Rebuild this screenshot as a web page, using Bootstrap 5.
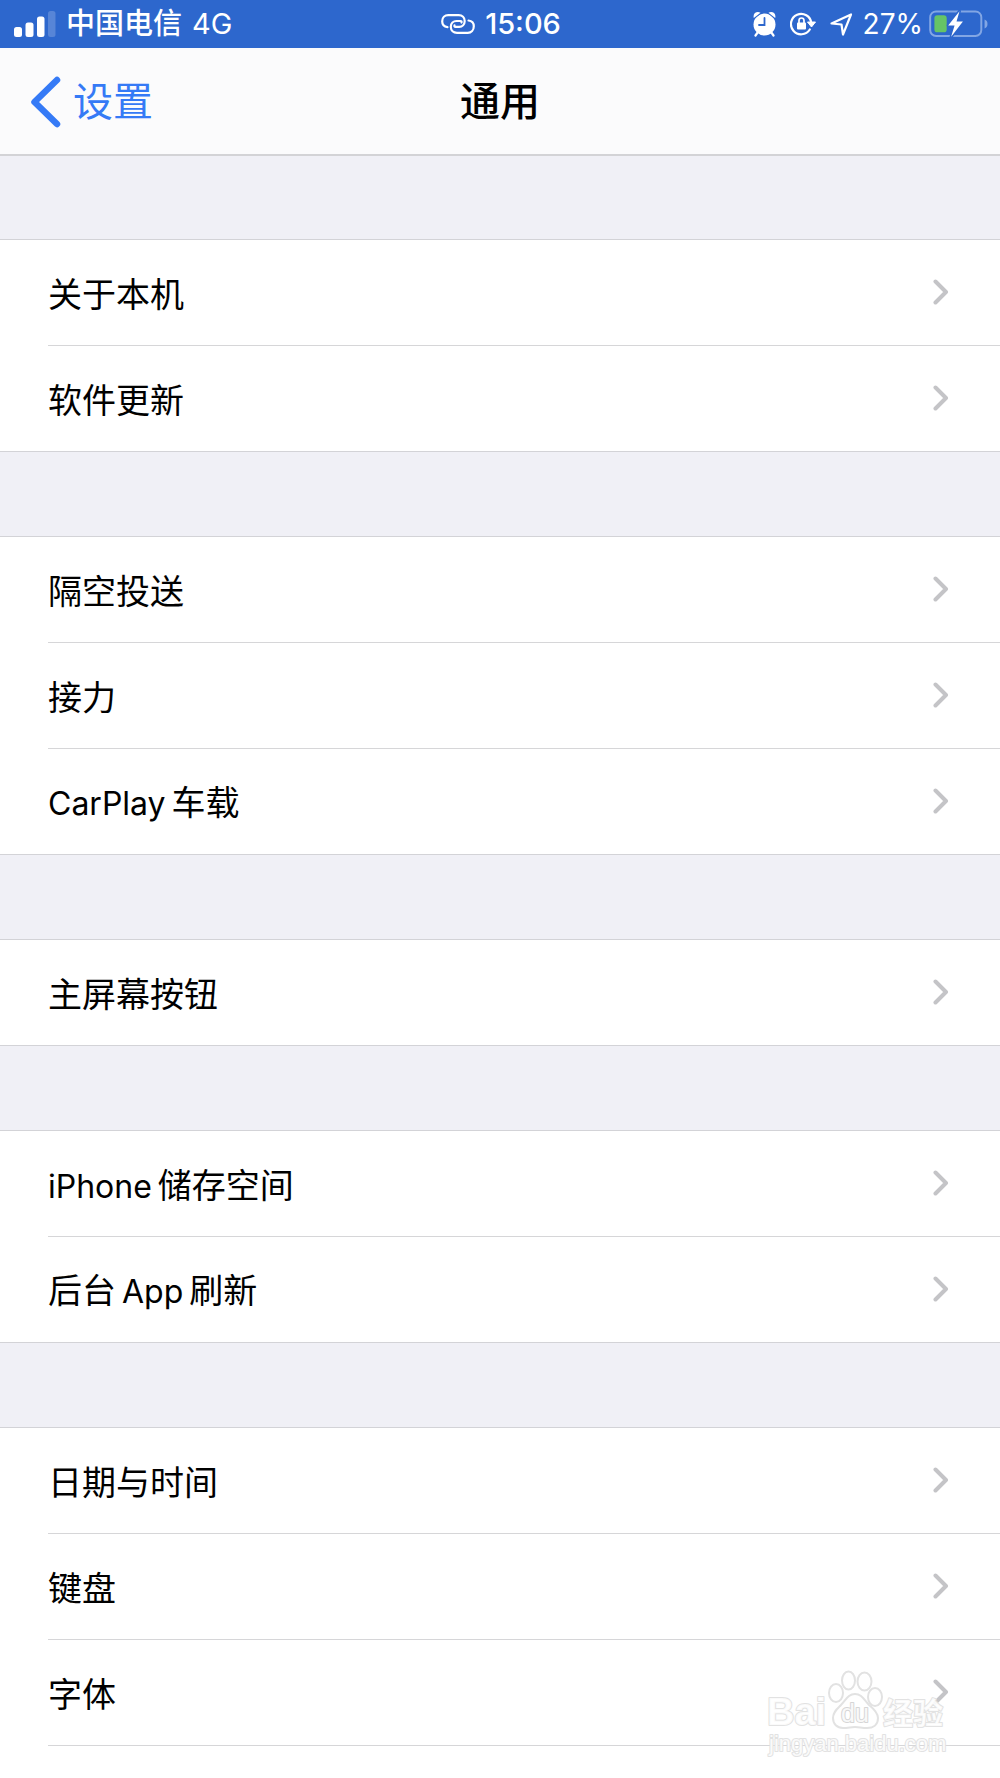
<!DOCTYPE html>
<html lang="zh-CN">
<head>
<meta charset="utf-8">
<meta name="viewport" content="width=device-width, initial-scale=1">
<title>通用</title>
<link rel="stylesheet" href="https://cdn.jsdelivr.net/npm/bootstrap@5.3.0/dist/css/bootstrap.min.css">
<style>
body { font-family: Inter, "Noto Sans CJK SC", sans-serif; color: #000; background: #f0f0f6; }
.page { min-height: 100vh; }
.statusbar { height: 48px; background: #2d67cd; color: #fff; font-size: 28px; line-height: 48px; padding: 0 12px 0 14px; }
.statusbar svg { flex: none; }
.side { flex: 1 1 0; }
.tight { gap: 10px; }
.carrier { gap: 10px; }
.carrier, .clock { font-size: 29px; font-weight: 500; }
.indicators { gap: 14px; }
.battery { gap: 6px; }
.topnav { height: 108px; background: #fbfbfc; border-bottom: 2px solid #d3d3d6; font-size: 40px; line-height: 60px; padding: 2px 30px 0; }
.topnav a { color: #357af6; gap: 12px; }
.topnav h1 { font-size: 40px; line-height: 60px; font-weight: 500; }
.settings { gap: 84px; padding-top: 83px; }
.settings .list-group { border-top: 1px solid #d3d3d7; background: #fff; }
.settings .list-group-item { height: 106px; padding: 0 51px 0 48px; font-size: 34px; line-height: 52px; color: #000; background: #fff; border: 0; }
.settings .list-group-item > span { padding-top: 4px; }
.settings .list-group-item > svg { margin-bottom: 2px; }
.settings .list-group-item:last-child { border-bottom: 1px solid #d3d3d7; }
.settings .list-group-item:not(:last-child)::after,
.settings .more .list-group-item::after { content: ""; position: absolute; left: 48px; right: 0; bottom: 0; border-bottom: 1px solid #d6d6d8; }
.settings .more .list-group-item { border-bottom: 0; }
.latin { font-size: 32px; }
.latin-before { margin-right: 6px; }
.latin-after { margin-left: 6px; }
.watermark { right: 50px; bottom: 16px; pointer-events: none; }
</style>
<script src="https://cdn.jsdelivr.net/npm/bootstrap@5.3.0/dist/js/bootstrap.bundle.min.js"></script>
</head>
<body>
<svg width="0" height="0" class="position-absolute" aria-hidden="true">
  <symbol id="chev" viewBox="0 0 16 26"><path d="M2.500 2.500 13 13 2.500 23.500" fill="none" stroke="#c4c4c7" stroke-width="4" stroke-linecap="round" stroke-linejoin="round"/></symbol>
</svg>
<div class="page d-flex flex-column position-relative overflow-hidden">
  <div class="statusbar d-flex align-items-center">
    <div class="side d-flex align-items-center carrier">
      <svg width="42" height="26" viewBox="0 0 42 26" fill="#fff" aria-label="信号"><rect x="0" y="16" width="8" height="10" rx="2.500"/><rect x="11.500" y="11.500" width="8" height="14.500" rx="2.500"/><rect x="23" y="5.500" width="7.500" height="20.500" rx="2.500"/><rect x="34" y="0" width="7.500" height="26" rx="2.500" opacity=".2"/></svg>
      <span>中国电信</span><span class="fw-normal">4G</span>
    </div>
    <div class="clock d-flex align-items-center tight">
      <svg width="34" height="20" viewBox="0 0 34 20" fill="none" stroke="#fff" stroke-width="2.200" stroke-linecap="round" aria-hidden="true"><path d="M6.500 13.200C3 12.700 1.200 10 1.200 7.200c0-3.600 2.600-6 6-6h10.500c3.500 0 6 2.300 6 5.800s-2.500 5.800-5.500 5.800h-3.700q-1.500 0-1-1.500"/><path d="M27.500 6.500c3.700.4 5.300 3 5.300 5.800 0 3.800-2.600 6.500-6 6.500H16c-3.600 0-6.200-2.500-6.200-6s2.600-5.800 5.700-5.800h4q1.500 0 1 1.500"/></svg>
      <span>15:06</span>
    </div>
    <div class="side d-flex align-items-center justify-content-end battery">
      <div class="indicators d-flex align-items-center">
      <svg width="23" height="26" viewBox="0 0 23 26" aria-label="闹钟"><g stroke="#fff" stroke-width="2.200" stroke-linecap="round"><path d="M5 21 2.500 24.500M18 21 20.500 24.500"/></g><circle cx="11.500" cy="13.500" r="11" fill="#fff"/><path d="M.8 7C-.5 2 4 0 7.500 1.700ZM22.200 7C23.500 2 19 0 15.500 1.700Z" fill="#fff" stroke="#2d67cd" stroke-width="2" paint-order="stroke"/><path d="M11.500 7v7H6" fill="none" stroke="#2d67cd" stroke-width="1.800" stroke-linecap="round"/></svg>
      <svg width="26" height="24" viewBox="0 0 26 24" aria-label="方向锁定"><path d="M21.300 11A10.200 10.200 0 1 0 19.800 17.500" fill="none" stroke="#fff" stroke-width="2.200" stroke-linecap="round"/><path d="M17.500 10h8L21.500 15Z" fill="#fff" stroke="#fff" stroke-linejoin="round"/><rect x="7" y="10.500" width="9" height="7" rx="1" fill="#fff"/><path d="M9 11V8.500a2.500 2.500 0 0 1 5 0V11" fill="none" stroke="#fff" stroke-width="1.700"/></svg>
      <svg width="23" height="23" viewBox="0 0 23 23" aria-label="定位"><path d="M1.500 10.500 21 1.500 13 21.500 11.500 11.500Z" fill="none" stroke="#fff" stroke-width="2.200" stroke-linejoin="round"/></svg>
      </div>
      <span class="ms-1">27%</span>
      <svg width="59" height="28" viewBox="0 0 60 28" aria-label="充电中"><rect x="1.200" y="1.200" width="52" height="25" rx="6" fill="none" stroke="#82a6e4" stroke-width="2"/><path d="M56.500 9.500v9q3-1 3-4.500t-3-4.500Z" fill="#82a6e4"/><rect x="5.500" y="5" width="12.500" height="17.500" rx="3" fill="#66c466"/><path d="M31 1 19.500 15.500H26L22.500 27 34.500 11.500H28Z" fill="#fff" stroke="#2d67cd" stroke-width="3" paint-order="stroke" stroke-linejoin="round"/></svg>
    </div>
  </div>

  <nav class="topnav d-flex align-items-center">
    <div class="side d-flex"><a href="#" class="d-flex align-items-center text-decoration-none"><svg width="31" height="52" viewBox="0 0 31 52" aria-hidden="true"><path d="M27 4 4.500 26 27 48" fill="none" stroke="#357af6" stroke-width="6.500" stroke-linecap="round" stroke-linejoin="round"/></svg><span>设置</span></a></div>
    <h1 class="m-0">通用</h1>
    <div class="side"></div>
  </nav>

  <main class="settings d-flex flex-column flex-grow-1">
    <div class="list-group rounded-0">
      <a href="#" class="list-group-item d-flex align-items-center justify-content-between"><span>关于本机</span><svg width="16" height="26"><use href="#chev"/></svg></a>
      <a href="#" class="list-group-item d-flex align-items-center justify-content-between"><span>软件更新</span><svg width="16" height="26"><use href="#chev"/></svg></a>
    </div>
    <div class="list-group rounded-0">
      <a href="#" class="list-group-item d-flex align-items-center justify-content-between"><span>隔空投送</span><svg width="16" height="26"><use href="#chev"/></svg></a>
      <a href="#" class="list-group-item d-flex align-items-center justify-content-between"><span>接力</span><svg width="16" height="26"><use href="#chev"/></svg></a>
      <a href="#" class="list-group-item d-flex align-items-center justify-content-between"><span><span class="latin latin-before">CarPlay</span>车载</span><svg width="16" height="26"><use href="#chev"/></svg></a>
    </div>
    <div class="list-group rounded-0">
      <a href="#" class="list-group-item d-flex align-items-center justify-content-between"><span>主屏幕按钮</span><svg width="16" height="26"><use href="#chev"/></svg></a>
    </div>
    <div class="list-group rounded-0">
      <a href="#" class="list-group-item d-flex align-items-center justify-content-between"><span><span class="latin latin-before">iPhone</span>储存空间</span><svg width="16" height="26"><use href="#chev"/></svg></a>
      <a href="#" class="list-group-item d-flex align-items-center justify-content-between"><span>后台<span class="latin latin-after latin-before">App</span>刷新</span><svg width="16" height="26"><use href="#chev"/></svg></a>
    </div>
    <div class="list-group rounded-0 flex-grow-1 more">
      <a href="#" class="list-group-item d-flex align-items-center justify-content-between"><span>日期与时间</span><svg width="16" height="26"><use href="#chev"/></svg></a>
      <a href="#" class="list-group-item d-flex align-items-center justify-content-between"><span>键盘</span><svg width="16" height="26"><use href="#chev"/></svg></a>
      <a href="#" class="list-group-item d-flex align-items-center justify-content-between"><span>字体</span><svg width="16" height="26"><use href="#chev"/></svg></a>
    </div>
  </main>

  <svg class="watermark position-absolute" width="184" height="92" viewBox="0 0 184 92" fill="#fff" fill-opacity=".85" stroke="#e2e2e2" stroke-width="2" stroke-linejoin="round">
    <ellipse cx="70" cy="23" rx="7" ry="9"/><ellipse cx="82.500" cy="10.500" rx="6.500" ry="9"/><ellipse cx="98.500" cy="11.500" rx="7" ry="9"/><ellipse cx="109" cy="27" rx="7" ry="9"/>
    <path d="M89 24c7 0 9 6 14 11 5 4 9 8 9 13 0 7-5 10-11 10-5 0-8-1-12-1s-7 1-12 1c-6 0-10-4-10-10s4-9 8-13c5-5 7-11 14-11Z"/>
    <g paint-order="stroke">
    <text x="1" y="55" font-family="Liberation Sans" font-weight="700" font-size="38">Bai</text>
    <text x="75" y="52" font-family="Liberation Sans" font-size="25" stroke="#d6d6d6">du</text>
    <text x="117" y="54" font-family="Noto Sans CJK SC" font-weight="700" font-size="30">经验</text>
    <text x="3" y="81" font-family="Liberation Sans" font-size="22">jingyan.baidu.com</text>
    </g>
  </svg>
</div>
</body>
</html>
